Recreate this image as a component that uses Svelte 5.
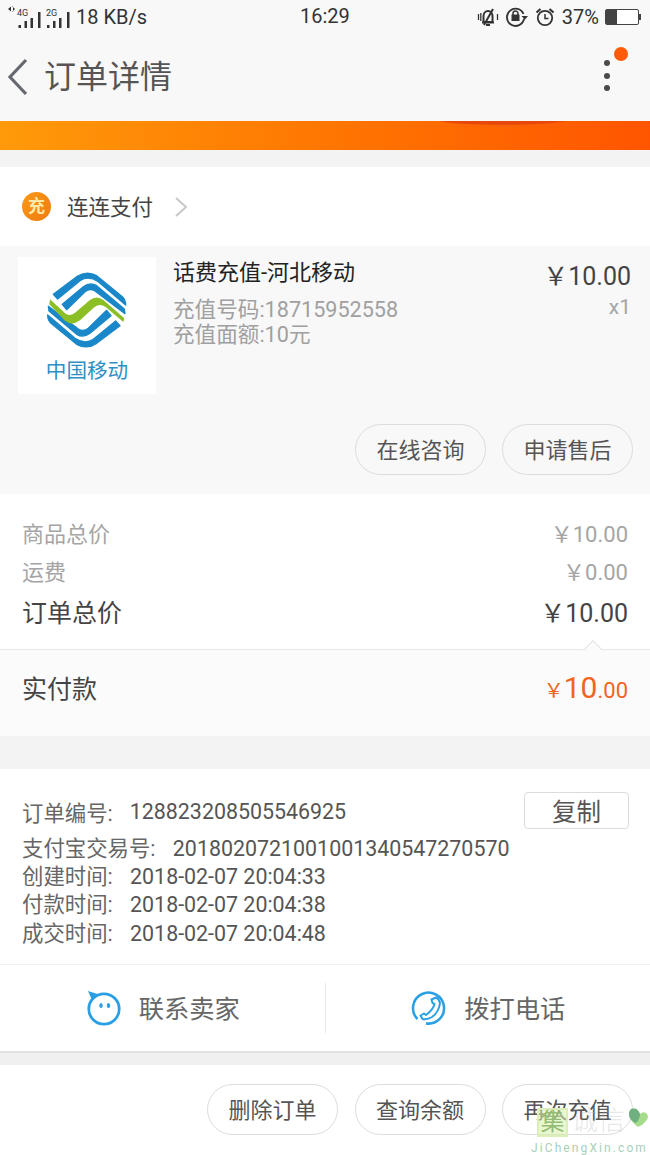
<script>
  // fullwidth yen sign, the plain one is too narrow here
  const yen = "\uFFE5"
  const summary = [
    { label: "商品总价", value: "10.00" },
    { label: "运费", value: "0.00" }
  ]
  const times = [
    { label: "创建时间:", value: "2018-02-07 20:04:33" },
    { label: "付款时间:", value: "2018-02-07 20:04:38" },
    { label: "成交时间:", value: "2018-02-07 20:04:48" }
  ]
</script>

<div class="page">
  <div class="top">
    <div class="status">
      <div class="status-left">
        <svg width="66" height="26" viewBox="0 0 66 26" fill="#333">
          <path d="M2 5l3-2.500v5zM6 2v6l3-3zM6 2h1v6H6z" />
          <text x="11" y="12" font-size="9" font-family="Roboto">4G</text>
          <rect x="12.500" y="21" width="2.500" height="3" />
          <rect x="18.500" y="17" width="2.500" height="7" />
          <rect x="24.500" y="14" width="2.500" height="10" />
          <rect x="32" y="8" width="2.500" height="16" />
          <text x="40" y="12" font-size="9" font-family="Roboto">2G</text>
          <rect x="41" y="21" width="2.500" height="3" />
          <rect x="47" y="17" width="2.500" height="7" />
          <rect x="53" y="14" width="2.500" height="10" />
          <rect x="61" y="8" width="2.500" height="16" />
        </svg>
        <span>18 KB/s</span>
      </div>
      <span class="clock">16:29</span>
      <div class="status-right">
        <svg width="22" height="20" viewBox="0 0 22 20" fill="none" stroke="#333" stroke-width="2">
          <path d="M6.500 15V9c0-3 2-5 4.500-5s4.500 2 4.500 5v6zM5 15.500h12M9 18h4M16 2L7 18" />
          <path d="M1.500 7v6M3.800 6v8M20.500 7v6" stroke-width="1.300" />
        </svg>
        <svg width="24" height="20" viewBox="0 0 24 20" fill="none" stroke="#333" stroke-width="1.800">
          <path d="M19 12a8.600 8.600 0 1 1-.5-5" />
          <path d="M16.500 9h6.500l-3.200 3.800z" fill="#333" stroke="none" />
          <rect x="6.500" y="7.500" width="8" height="6.500" fill="#333" stroke="none" />
          <path d="M8 8V6.500a2.500 2.500 0 0 1 5 0V8" stroke-width="1.500" />
        </svg>
        <svg width="20" height="20" viewBox="0 0 20 20" fill="none" stroke="#333" stroke-width="1.800">
          <circle cx="10" cy="11" r="7.200" />
          <path d="M10 7v4.500h3.500" stroke-width="1.500" />
          <path d="M1.500 5.500L5.500 2M18.500 5.500L14.500 2" stroke-width="2.200" />
        </svg>
        <span class="pct">37%</span>
        <div class="battery"><div class="battery-fill"></div></div>
      </div>
    </div>
    <div class="nav">
      <svg class="back" width="22" height="38" viewBox="0 0 22 38" fill="none" stroke="#666a70" stroke-width="3.200">
        <path d="M19 2L3 19l16 17" />
      </svg>
      <h1>订单详情</h1>
      <div class="more">
        <i></i><i></i><i></i>
        <b></b>
      </div>
    </div>
  </div>

  <div class="banner"><div class="banner-curve"></div></div>

  <div class="gap gap-17"></div>

  <div class="shop">
    <div class="shop-logo">充</div>
    <span>连连支付</span>
    <svg width="14" height="22" viewBox="0 0 14 22" fill="none" stroke="#c8c8c8" stroke-width="2">
      <path d="M2 2l10 9-10 9" />
    </svg>
  </div>

  <div class="product">
    <div class="product-main">
      <div class="thumb">
        <svg width="104" height="90" viewBox="0 0 312 270">
          <g fill="#1a87c9" stroke="#1a87c9" stroke-width="4" stroke-linejoin="round">
            <path d="M55 88L125 35Q155 15 185 32L262 95Q272 105 272 120L190 50Q160 30 135 47L68 102Z" />
            <path d="M82 118L145 65Q165 50 185 62L268 132L270 146L180 78Q165 68 150 80L95 134Z" />
            <g transform="rotate(180 155 135)">
              <path d="M55 88L125 35Q155 15 185 32L262 95Q272 105 272 120L190 50Q160 30 135 47L68 102Z" />
              <path d="M82 118L145 65Q165 50 185 62L268 132L270 146L180 78Q165 68 150 80L95 134Z" />
            </g>
          </g>
          <path d="M45 103L92 146Q105 155 120 143L165 105Q185 90 205 105L268 160L265 171L212 126Q192 113 176 128L135 166Q110 184 90 167L43 118Z" fill="#8cbf26" />
        </svg>
        <span class="thumb-name">中国移动</span>
      </div>
      <div class="product-text">
        <div class="product-title">话费充值-河北移动</div>
        <div class="product-sub first">充值号码:18715952558</div>
        <div class="product-sub">充值面额:10元</div>
      </div>
      <div class="product-price">
        <div class="price">{yen}10.00</div>
        <div class="qty">x1</div>
      </div>
    </div>
    <div class="actions">
      <button class="pill">在线咨询</button>
      <button class="pill">申请售后</button>
    </div>
  </div>

  <div class="summary">
    {#each summary as row}
      <div class="sum-row">
        <span>{row.label}</span>
        <span class="sum-val">{yen}{row.value}</span>
      </div>
    {/each}
    <div class="total-row">
      <span>订单总价</span>
      <span class="total-val">{yen}10.00</span>
    </div>
  </div>

  <div class="paid">
    <div class="notch"></div>
    <span>实付款</span>
    <span class="paid-val"><span class="paid-yen">{yen}</span><span class="paid-big">10</span>.00</span>
  </div>

  <div class="gap gap-33"></div>

  <div class="info">
    <div class="info-first">
      <span class="info-label">订单编号:</span>
      <span>128823208505546925</span>
      <button class="copy">复制</button>
    </div>
    <div class="info-row alipay">
      <span class="info-label">支付宝交易号:</span>
      <span>2018020721001001340547270570</span>
    </div>
    {#each times as t}
      <div class="info-row">
        <span class="info-label">{t.label}</span>
        <span>{t.value}</span>
      </div>
    {/each}
  </div>

  <div class="contact">
    <div class="contact-item">
      <svg width="36" height="36" viewBox="0 0 36 36" fill="none" stroke="#2a9fe4" stroke-width="2.800">
        <circle cx="18" cy="19" r="15.200" />
        <path d="M2 1l11 3.500-7 5.500z" fill="#2a9fe4" stroke="none" />
        <ellipse cx="15" cy="15.500" rx="1.700" ry="2.500" fill="#2a9fe4" stroke="none" />
        <ellipse cx="22.500" cy="15.500" rx="1.700" ry="2.500" fill="#2a9fe4" stroke="none" />
      </svg>
      <span>联系卖家</span>
    </div>
    <div class="contact-line"></div>
    <div class="contact-item">
      <svg width="36" height="36" viewBox="0 0 36 36" fill="none" stroke="#2a9fe4" stroke-width="2.600">
        <path d="M6.500 29A15.500 15.500 0 1 1 15 33.400" />
        <path d="M20.500 9.500L25 7.500Q28 9 29 13Q28 22 21 27Q16 30 11.500 29L9.500 25.500L13 23.500L15 25Q22 20 23.500 14L21.500 13Z" stroke-width="2" stroke-linejoin="round" />
      </svg>
      <span>拨打电话</span>
    </div>
  </div>

  <div class="divider"></div>

  <div class="bottom">
    <button class="pill">删除订单</button>
    <button class="pill">查询余额</button>
    <button class="pill">再次充值</button>
  </div>

  <div class="watermark">
    <div class="wm-box">集</div>
    <div class="wm-cn">诚信</div>
    <svg class="wm-leaf" width="21" height="19" viewBox="0 0 21 19">
      <path d="M3 1q6-2 9 5 3-3 6-1 4 3 0 8-3 4-8 6Q2 13 1 7q0-4 2-6z" fill="#a5dc8c" />
      <path d="M3 1q6-2 9 5 0 5-4 9Q2 13 1 7q0-4 2-6z" fill="#70b080" />
    </svg>
    <div class="wm-en">JiChengXin.com</div>
  </div>
</div>

<style>
  :global(body) {
    margin: 0;
    background: #fff;
  }

  .page {
    position: relative;
    width: 650px;
    height: 1155px;
    overflow: hidden;
    font-family: Roboto, "Noto Sans CJK SC", sans-serif;
    color: #444;
  }

  .top {
    height: 121px;
    background: #f8f8f8;
  }

  .status {
    height: 32px;
    padding-top: 1px;
    display: flex;
    align-items: center;
    justify-content: space-between;
    font-size: 20px;
    color: #333;
    position: relative;
  }

  .status-left {
    display: flex;
    align-items: center;
    gap: 4px;
    padding-left: 6px;
  }

  .clock {
    position: absolute;
    left: 300px;
    top: 4px;
  }

  .status-right {
    display: flex;
    align-items: center;
    gap: 6px;
    padding-right: 11px;
  }

  .pct {
    margin-left: 1px;
  }

  .battery {
    width: 32px;
    height: 14px;
    border: 1px solid #444;
    border-radius: 2px;
    background: #fff;
    position: relative;
  }

  .battery::after {
    content: "";
    position: absolute;
    right: -3px;
    top: 4px;
    width: 2px;
    height: 6px;
    background: #444;
  }

  .battery-fill {
    width: 11px;
    height: 100%;
    background: #444;
  }

  .nav {
    display: flex;
    align-items: center;
    height: 87px;
    padding-left: 7px;
    position: relative;
  }

  .back {
    margin-right: 15px;
  }

  h1 {
    margin: 0;
    font-size: 32px;
    font-weight: 400;
    color: #555;
    line-height: 1;
  }

  .more {
    position: absolute;
    left: 604px;
    top: 27px;
    display: flex;
    flex-direction: column;
    gap: 6.500px;
  }

  .more i {
    display: block;
    width: 6px;
    height: 6px;
    border-radius: 50%;
    background: #4a4a4a;
  }

  .more b {
    position: absolute;
    left: 10px;
    top: -13px;
    width: 14px;
    height: 14px;
    border-radius: 50%;
    background: #ff5a0a;
  }

  .banner {
    height: 29px;
    background: linear-gradient(90deg, #ff9a0a, #ff7a02 45%, #ff5500);
    position: relative;
    overflow: hidden;
  }

  .banner-curve {
    position: absolute;
    left: 435px;
    top: -8px;
    width: 135px;
    height: 12px;
    border-radius: 50%;
    background: #e8480a;
  }

  .gap {
    background: #f3f3f3;
  }

  .gap-17 {
    height: 17px;
  }

  .gap-33 {
    height: 33px;
  }

  .shop {
    height: 79px;
    display: flex;
    align-items: center;
    padding-left: 22px;
    font-size: 21.500px;
    color: #444;
  }

  .shop span {
    margin-bottom: 3px;
  }

  .shop-logo {
    width: 29px;
    height: 29px;
    border-radius: 50%;
    background: linear-gradient(135deg, #fb9a16, #ef7a10);
    color: #ffe9a8;
    font-size: 17px;
    font-weight: 700;
    line-height: 29px;
    text-align: center;
    margin-right: 16px;
  }

  .shop svg {
    margin-left: 21px;
  }

  .product {
    height: 248px;
    box-sizing: border-box;
    background: #f8f8f8;
    padding: 11px 19px 0 18px;
  }

  .product-main {
    display: flex;
    height: 167px;
  }

  .thumb {
    width: 138px;
    height: 137px;
    background: #fff;
    display: flex;
    flex-direction: column;
    align-items: center;
    padding-top: 8px;
    box-sizing: border-box;
  }

  .thumb-name {
    font-size: 20.600px;
    line-height: 24px;
    color: #2f8fc4;
    margin-top: 4px;
  }

  .product-text {
    margin-left: 17px;
    flex: 1;
    padding-top: 1px;
  }

  .product-title {
    font-size: 22px;
    line-height: 30px;
    color: #222;
  }

  .product-sub {
    font-size: 21.600px;
    line-height: 25px;
    color: #a0a0a0;
  }

  .product-sub.first {
    margin-top: 9px;
  }

  .product-price {
    text-align: right;
    padding-top: 5px;
  }

  .price {
    font-size: 25px;
    line-height: 30px;
    color: #444;
  }

  .qty {
    font-size: 21px;
    color: #a5a5a5;
    line-height: 26px;
    margin-top: 2px;
  }

  .actions {
    display: flex;
    justify-content: flex-end;
    gap: 16px;
    margin-right: -2px;
  }

  .pill {
    box-sizing: border-box;
    width: 131px;
    height: 51px;
    border: 1px solid #dcdcdc;
    border-radius: 26px;
    background: transparent;
    font-family: inherit;
    font-size: 22px;
    color: #555;
    padding: 0 0 3px;
  }

  .summary {
    height: 155px;
    box-sizing: border-box;
    padding: 22px 22px 0;
    background: #fff;
  }

  .sum-row,
  .total-row {
    display: flex;
    justify-content: space-between;
    align-items: center;
  }

  .sum-row {
    font-size: 22px;
    line-height: 38px;
    color: #a5a5a5;
    height: 38px;
  }

  .sum-val {
    font-size: 22px;
  }

  .total-row {
    font-size: 25px;
    line-height: 40px;
    color: #444;
    margin-top: 2px;
  }

  .total-val {
    font-size: 25px;
  }

  .paid {
    position: relative;
    height: 87px;
    box-sizing: border-box;
    border-top: 1px solid #e8e8e8;
    background: #fbfbfb;
    padding: 0 22px 12px;
    display: flex;
    justify-content: space-between;
    align-items: center;
    font-size: 25px;
    color: #444;
  }

  .notch {
    position: absolute;
    left: 586px;
    top: -7px;
    width: 13px;
    height: 13px;
    background: #fbfbfb;
    border-top: 1px solid #e4e4e4;
    border-left: 1px solid #e4e4e4;
    transform: rotate(45deg);
  }

  .paid-val {
    color: #f0641e;
    font-size: 22px;
  }

  .paid-yen {
    font-size: 20px;
  }

  .paid-big {
    font-size: 30px;
  }

  .info {
    height: 196px;
    box-sizing: border-box;
    padding: 22px 22px 0;
    font-size: 21.400px;
    color: #555;
    border-bottom: 1px solid #f0f0f0;
  }

  .info-first {
    display: flex;
    align-items: center;
    height: 40px;
  }

  .info-label {
    margin-right: 17px;
    color: #666;
  }

  .info-row .info-label {
    margin-right: 12px;
  }

  .alipay {
    margin-top: 4px;
  }

  .info-row {
    height: 28.200px;
    line-height: 28px;
    white-space: nowrap;
  }

  .copy {
    margin-left: auto;
    margin-right: -1px;
    margin-top: -1px;
    width: 105px;
    height: 37px;
    border: 1px solid #dcdcdc;
    border-radius: 4px;
    background: #fff;
    font-family: inherit;
    font-size: 24.500px;
    color: #555;
    padding: 0 0 3px;
  }

  .contact {
    height: 86px;
    display: flex;
    align-items: center;
  }

  .contact-item {
    flex: 1;
    display: flex;
    align-items: center;
    justify-content: center;
    gap: 17px;
    padding-left: 1px;
    font-size: 25.300px;
    color: #666;
  }

  .contact-item span {
    margin-bottom: 2px;
  }

  .contact-line {
    width: 1px;
    height: 50px;
    background: #e8e8e8;
  }

  .divider {
    height: 14px;
    box-sizing: border-box;
    background: #f0f0f0;
    border-top: 2px solid #e2e2e2;
    border-bottom: 1px solid #f0f0f0;
  }

  .bottom {
    height: 90px;
    box-sizing: border-box;
    display: flex;
    justify-content: flex-end;
    align-items: center;
    gap: 16.500px;
    padding: 0 17px 2px 0;
  }

  .watermark {
    position: absolute;
    left: 530px;
    top: 1105px;
    width: 120px;
    height: 50px;
    pointer-events: none;
  }

  .wm-box {
    position: absolute;
    left: 7px;
    top: 3px;
    width: 31px;
    height: 29px;
    box-sizing: border-box;
    border: 2px solid #dcefb8;
    background: rgba(215, 240, 170, 0.55);
    color: #93bd72;
    font-size: 24px;
    line-height: 24px;
    text-align: center;
  }

  .wm-cn {
    position: absolute;
    left: 41px;
    top: -3px;
    font-size: 27px;
    line-height: 38px;
    font-weight: 300;
    color: rgba(170, 170, 170, 0.3);
  }

  .wm-leaf {
    position: absolute;
    left: 98px;
    top: 3px;
  }

  .wm-en {
    position: absolute;
    left: 1px;
    top: 37px;
    font-size: 12px;
    line-height: 12px;
    letter-spacing: 2.100px;
    color: #a8d0b8;
    white-space: nowrap;
  }
</style>
